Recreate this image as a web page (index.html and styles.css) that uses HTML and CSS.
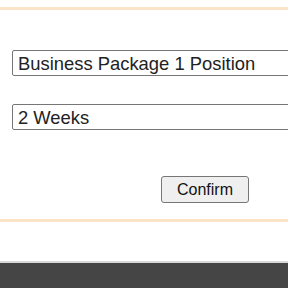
FILE: index.html
```html
<!DOCTYPE html>
<html>
<head>
    <title>Upgrade Listing</title>
    <meta charset="UTF-8">
    <link rel="stylesheet" href="styles.css">
</head>
<body>
    <div class="panel">
        <form class="upgrade-form">
            <div class="form-row first">
                <select id="package">
                    <option>Business Package 1 Position</option>
                </select>
            </div>
            <div class="form-row">
                <select id="duration">
                    <option>2 Weeks</option>
                </select>
            </div>
            <div class="actions">
                <button type="button">Confirm</button>
            </div>
        </form>
    </div>
    <div class="footer"></div>
</body>
</html>
```

FILE: styles.css
```css
html, body {
    margin: 0;
    padding: 0;
    overflow: hidden;
    background: #fff;
}
body {
    font-family: "Liberation Sans", Arial, sans-serif;
    width: 288px;
    height: 288px;
}
.panel {
    margin-top: 7px;
    border-top: 3px solid #fbe4c8;
    border-bottom: 3px solid #fbe4c8;
    height: 215px;
    box-sizing: border-box;
}
.upgrade-form {
    padding-left: 12px;
    overflow: hidden;
}
.form-row {
    margin-top: 28px;
}
.form-row.first {
    padding-top: 12px;
}
.form-row select {
    width: 290px;
    height: 26px;
    font-family: "Liberation Sans", Arial, sans-serif;
    font-size: 18.4px;
    color: #222;
    border: 1px solid #767676;
    border-radius: 2px;
    background: #fff;
    padding: 0 5px;
    -webkit-appearance: none;
    appearance: none;
}
.actions {
    margin-top: 46px;
    padding-left: 149px;
    padding-bottom: 2px;
}
.actions button {
    width: 88px;
    height: 27px;
    font-family: "Liberation Sans", Arial, sans-serif;
    font-size: 16px;
    color: #111;
    background: #efefef;
    border: 1px solid #767676;
    border-radius: 3px;
}
.footer {
    margin-top: 39px;
    border-top: 2px solid #d9d9d9;
    background: #454545;
    height: 25px;
}
```
